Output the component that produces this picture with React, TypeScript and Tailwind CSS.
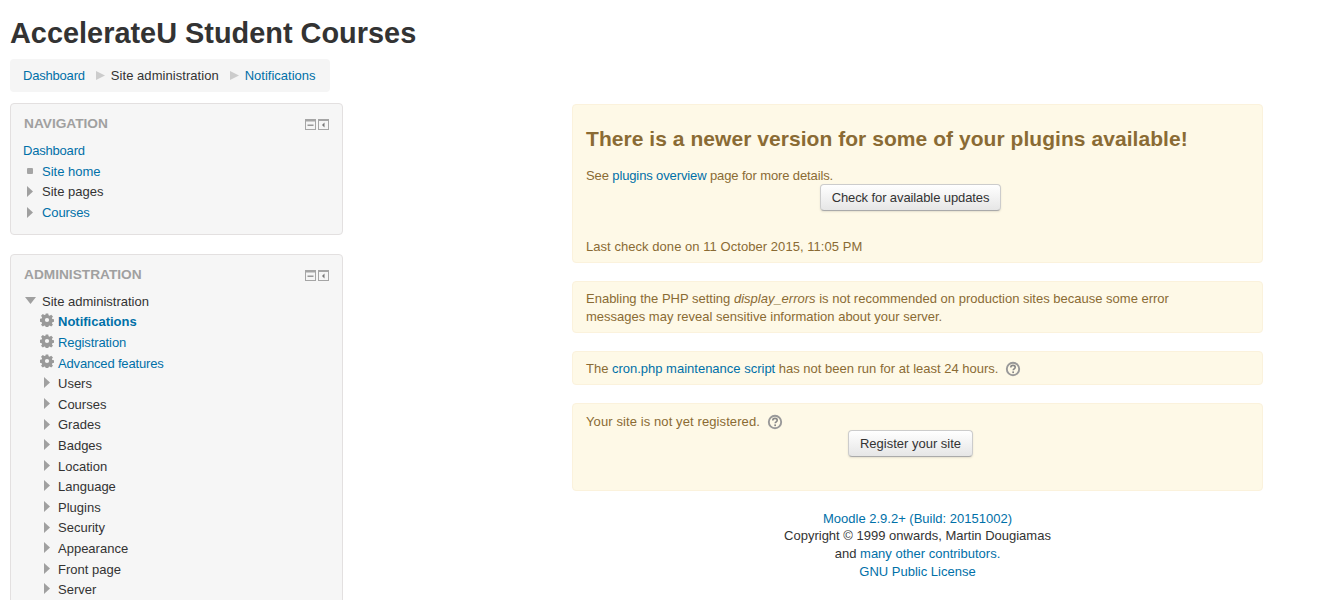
const link = 'text-[#0070a8]';

function Arrow({ className = '' }: { className?: string }) {
  return (
    <svg width="6" height="11" viewBox="0 0 6 11" className={`shrink-0 ${className}`}>
      <path d="M0 0 L6 5.5 L0 11 Z" fill="#a0a0a0" />
    </svg>
  );
}

function Crumb() {
  return (
    <svg width="9" height="9" viewBox="0 0 9 9" className="mr-[6px] ml-[11px] shrink-0">
      <path d="M0 0 L9 4.5 L0 9 Z" fill="#ccc" />
    </svg>
  );
}

function Gear() {
  return (
    <svg width="14" height="14" viewBox="0 0 16 16" className="ml-[1px] shrink-0 -translate-y-[2px]">
      <path
        fillRule="evenodd"
        fill="#999"
        d="M6.6 0.5h2.8l.4 2.1 1.2.5 1.8-1.2 2 2-1.2 1.8.5 1.2 2.1.4v2.8l-2.1.4-.5 1.2 1.2 1.8-2 2-1.8-1.2-1.2.5-.4 2.1H6.6l-.4-2.1-1.2-.5-1.8 1.2-2-2 1.2-1.8-.5-1.2-2.1-.4V6.6l2.1-.4.5-1.2L1.2 3.2l2-2L5 2.4l1.2-.5zM8 5.6a2.4 2.4 0 1 0 0 4.8 2.4 2.4 0 0 0 0-4.8z"
      />
    </svg>
  );
}

function Help() {
  return (
    <svg width="16" height="16" viewBox="0 0 16 16" className="shrink-0">
      <circle cx="8" cy="8" r="6.2" fill="none" stroke="#999" strokeWidth="1.9" />
      <path d="M5.8 6.4c0-1.3 1-2 2.2-2s2.2.7 2.2 1.9c0 1.5-2 1.6-2 3" fill="none" stroke="#888" strokeWidth="1.6" />
      <rect x="7.3" y="10.4" width="1.7" height="1.7" fill="#888" />
    </svg>
  );
}

function BlockIcons() {
  return (
    <div className="mt-[1px] flex gap-[2px]">
      <svg width="11" height="11" viewBox="0 0 11 11">
        <rect x="0.5" y="0.5" width="10" height="10" fill="#f5f5f5" stroke="#a5a5a5" />
        <rect x="0" y="0" width="11" height="2.5" fill="#a5a5a5" />
        <rect x="2.5" y="5.5" width="6" height="1.5" fill="#999" />
      </svg>
      <svg width="11" height="11" viewBox="0 0 11 11">
        <rect x="0.5" y="0.5" width="10" height="10" fill="#f5f5f5" stroke="#a5a5a5" />
        <rect x="0" y="0" width="11" height="2" fill="#a5a5a5" />
        <path d="M6.5 3.5 L4 6 L6.5 8.5 Z" fill="#777" />
      </svg>
    </div>
  );
}

function Block({ title, children, className = '' }: { title: string; children: React.ReactNode; className?: string }) {
  return (
    <div className={`rounded border border-[#e3e0e0] bg-[#f6f6f6] pr-[13px] pl-[12px] ${className}`}>
      <div className="flex h-[34px] items-center justify-between pt-[6px]">
        <h2 className="ml-[1px] text-[13.7px] font-bold text-[#a0a0a0]">{title}</h2>
        <BlockIcons />
      </div>
      {children}
    </div>
  );
}

function Row({ icon, children, indent = '', iconPad = '' }: { icon: React.ReactNode; children: React.ReactNode; indent?: string; iconPad?: string }) {
  return (
    <div className={`flex h-[20.6px] items-center ${indent}`}>
      <span className={`flex w-[19px] shrink-0 items-center ${iconPad}`}>{icon}</span>
      {children}
    </div>
  );
}

const adminGroups = ['Users', 'Courses', 'Grades', 'Badges', 'Location', 'Language', 'Plugins', 'Security', 'Appearance', 'Front page', 'Server'];

function Alert({ children, className = '' }: { children: React.ReactNode; className?: string }) {
  return (
    <div className={`rounded border border-[#fbf2dc] bg-[#fef9e7] pr-[35px] pl-[13px] text-[#8a6b34] ${className}`}>{children}</div>
  );
}

function Button({ children, className = 'px-[11px]' }: { children: React.ReactNode; className?: string }) {
  return (
    <button className={`h-[27px] rounded border border-[#ccc] border-b-[#aaa] bg-gradient-to-b from-white to-[#e6e6e6] text-[#333] shadow-[0_1px_2px_rgba(0,0,0,0.1)] ${className}`}>
      {children}
    </button>
  );
}

export default function App() {
  return (
    <div className="h-screen overflow-hidden bg-white px-[10px] font-['Liberation_Sans',Arial,sans-serif] text-[13px] text-[#333]">
      <h1 className="pt-[14px] text-[28.9px] leading-[38px] font-bold text-[#333]">AccelerateU Student Courses</h1>
      <nav className="mt-[7px] flex h-[33px] w-[320px] items-center rounded bg-[#f5f5f5] pl-[13px] whitespace-nowrap">
        <a className={`${link} tracking-[-0.2px]`}>Dashboard</a>
        <Crumb />
        <span className="tracking-[0.05px]">Site administration</span>
        <Crumb />
        <a className={link}>Notifications</a>
      </nav>
      <div className="mt-[11px] flex items-start">
        <aside className="w-[333px] shrink-0">
          <Block title="NAVIGATION" className="h-[132px]">
            <div className="mt-[2.6px] flex h-[20.5px] items-center">
              <a className={`${link} tracking-[-0.2px]`}>Dashboard</a>
            </div>
            <Row iconPad="pl-[4px]" icon={<span className="block h-[6px] w-[6px] rounded-[1px] bg-[#a5a5a5]" />}>
              <a className={link}>Site home</a>
            </Row>
            <Row iconPad="pl-[4px]" icon={<Arrow />}>
              Site pages
            </Row>
            <Row iconPad="pl-[4px]" icon={<Arrow />}>
              <a className={`${link} tracking-[-0.1px]`}>Courses</a>
            </Row>
          </Block>
          <Block title="ADMINISTRATION" className="mt-[19px] h-[500px]">
            <div className="mt-[2.25px]">
              <Row
                iconPad="pl-[2px]"
                icon={
                  <svg width="11" height="7" viewBox="0 0 11 7" className="-translate-y-[1px]">
                    <path d="M0 0 L11 0 L5.5 7 Z" fill="#a0a0a0" />
                  </svg>
                }
              >
                Site administration
              </Row>
              <Row indent="pl-[16px]" icon={<Gear />}>
                <a className={`${link} font-bold`}>Notifications</a>
              </Row>
              <Row indent="pl-[16px]" icon={<Gear />}>
                <a className={`${link} tracking-[-0.1px]`}>Registration</a>
              </Row>
              <Row indent="pl-[16px]" icon={<Gear />}>
                <a className={`${link} tracking-[-0.17px]`}>Advanced features</a>
              </Row>
              {adminGroups.map((g) => (
                <Row key={g} indent="pl-[16px]" iconPad="pl-[5px]" icon={<Arrow className="-translate-y-[1px]" />}>
                  {g}
                </Row>
              ))}
            </div>
          </Block>
        </aside>
        <main className="mt-[1px] ml-[229px] w-[691px] shrink-0">
          <Alert className="h-[159px]">
            <h3 className="pt-[20px] text-[21px] leading-[28px] font-bold tracking-[0.05px] whitespace-nowrap">There is a newer version for some of your plugins available!</h3>
            <p className="mt-[14px] leading-[18px] tracking-[-0.12px]">
              See <a className={link}>plugins overview</a> page for more details.
            </p>
            <div className="-mt-[1px] flex justify-center pl-[8px]">
              <Button className="px-[11px] pt-[1px] tracking-[-0.1px]">Check for available updates</Button>
            </div>
            <p className="mt-[27px] leading-[18px] tracking-[0.05px]">Last check done on 11 October 2015, 11:05 PM</p>
          </Alert>
          <Alert className="mt-[18px] flex h-[52px] items-center pt-[2px]">
            <p className="leading-[18px]">
              Enabling the PHP setting <em>display_errors</em> is not recommended on production sites because some error messages may reveal sensitive information about your server.
            </p>
          </Alert>
          <Alert className="mt-[18px] flex h-[34px] items-center pt-[2px]">
            The <a className={`${link} mx-[3.5px]`}>cron.php maintenance script</a> has not been run for at least 24 hours.
            <span className="ml-[7px]">
              <Help />
            </span>
          </Alert>
          <Alert className="mt-[18px] h-[88px]">
            <div className="flex h-[35px] items-center">
              <span className="tracking-[0.1px]">Your site is not yet registered.</span>
              <span className="ml-[7px]">
                <Help />
              </span>
            </div>
            <div className="-mt-[9px] flex justify-center pl-[8px]">
              <Button>Register your site</Button>
            </div>
          </Alert>
          <footer className="mt-[18.7px] text-center leading-[17.7px]">
            <div>
              <a className={link}>Moodle 2.9.2+ (Build: 20151002)</a>
            </div>
            <div>Copyright © 1999 onwards, Martin Dougiamas</div>
            <div>
              and <a className={link}>many other contributors.</a>
            </div>
            <div>
              <a className={link}>GNU Public License</a>
            </div>
          </footer>
        </main>
      </div>
    </div>
  );
}
